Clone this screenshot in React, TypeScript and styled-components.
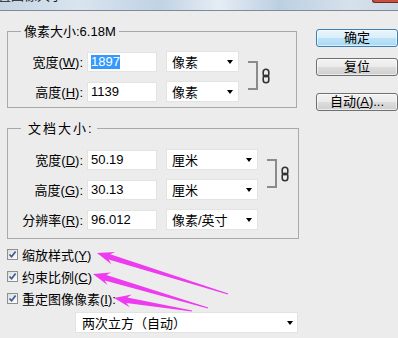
import styled, { createGlobalStyle } from 'styled-components'

const GlobalStyle = createGlobalStyle`
  html, body {
    margin: 0;
    padding: 0;
    background: #ececec;
  }
  body {
    font-family: 'Liberation Sans', 'Noto Sans CJK SC', sans-serif;
    font-size: 13px;
    color: #000;
  }
`

type ArrowSpec = { tip: [number, number]; tail: [number, number] }

const arrows: ArrowSpec[] = [
  { tip: [97, 253], tail: [228, 294] },
  { tip: [93, 274], tail: [208, 308] },
  { tip: [114, 298], tail: [192, 311] },
]

// polygon for a tapered arrow, head at tip
const arrowPoints = ({ tip, tail }: ArrowSpec) => {
  const [tx, ty] = tip
  const [ex, ey] = tail
  const len = Math.hypot(ex - tx, ey - ty)
  const ux = (ex - tx) / len
  const uy = (ey - ty) / len
  const nx = -uy
  const ny = ux
  const at = (d: number, w: number) =>
    `${(tx + ux * d + nx * w).toFixed(1)},${(ty + uy * d + ny * w).toFixed(1)}`
  const end = (w: number) => `${(ex + nx * w).toFixed(1)},${(ey + ny * w).toFixed(1)}`
  return [
    at(0, 0),
    at(17, 6.5),
    at(13, 2.8),
    end(0.6),
    end(-0.6),
    at(13, -2.8),
    at(17, -6.5),
  ].join(' ')
}

const App = () => {
  return (
    <>
      <GlobalStyle />
      <Window>
        <TitleBar>
          <TitleText>置图像大小</TitleText>
          <CloseBtn />
        </TitleBar>
        <Main>
          <LeftCol>
            <GroupBox $width={290} $top={12} $padTop={11} $padBottom={5}>
              <Legend>像素大小:6.18M</Legend>
              <GroupBody>
                <Rows>
                  <Row>
                    <Label>
                      宽度(<u>W</u>):
                    </Label>
                    <TextInput>
                      <Selected>1897</Selected>
                    </TextInput>
                    <Select $width={73}>像素</Select>
                  </Row>
                  <Row>
                    <Label>
                      高度(<u>H</u>):
                    </Label>
                    <TextInput>1139</TextInput>
                    <Select $width={73}>像素</Select>
                  </Row>
                </Rows>
                <LinkBracket />
                <LinkIcon />
              </GroupBody>
            </GroupBox>

            <GroupBox $width={292} $top={12} $padTop={12} $padBottom={8}>
              <Legend $indent={7} $spaced>
                文档大小:
              </Legend>
              <GroupBody>
                <Rows>
                  <Row>
                    <Label>
                      宽度(<u>D</u>):
                    </Label>
                    <TextInput>50.19</TextInput>
                    <Select $width={92}>厘米</Select>
                  </Row>
                  <Row>
                    <Label>
                      高度(<u>G</u>):
                    </Label>
                    <TextInput>30.13</TextInput>
                    <Select $width={92}>厘米</Select>
                  </Row>
                  <Row>
                    <Label>
                      分辨率(<u>R</u>):
                    </Label>
                    <TextInput>96.012</TextInput>
                    <Select $width={92}>像素/英寸</Select>
                  </Row>
                </Rows>
                <LinkBracket />
                <LinkIcon />
              </GroupBody>
            </GroupBox>

            <Checks>
              <CheckRow>
                <CheckBox />
                <span>
                  缩放样式(<u>Y</u>)
                </span>
              </CheckRow>
              <CheckRow>
                <CheckBox />
                <span>
                  约束比例(<u>C</u>)
                </span>
              </CheckRow>
              <CheckRow>
                <CheckBox />
                <span>
                  重定图像像素(<u>I</u>):
                </span>
              </CheckRow>
            </Checks>
            <ResampleSelect>两次立方（自动）</ResampleSelect>
          </LeftCol>

          <RightCol>
            <Button $primary>确定</Button>
            <Button $gap={11}>复位</Button>
            <Button $gap={17}>
              <span>
                自动(<u>A</u>)...
              </span>
            </Button>
          </RightCol>
        </Main>

        <ArrowLayer viewBox="0 0 398 338">
          {arrows.map((a, i) => (
            <polygon key={i} points={arrowPoints(a)} />
          ))}
        </ArrowLayer>
      </Window>
    </>
  )
}

const CheckBox = () => (
  <CheckBoxBox>
    <svg width="9" height="9" viewBox="0 0 9 9">
      <path d="M1.5 4.5 L3.6 6.8 L7.6 1.6" fill="none" stroke="#3a5a94" strokeWidth="1.7" />
    </svg>
  </CheckBoxBox>
)

const LinkIcon = () => (
  <LinkWrap>
    <svg width="8" height="16" viewBox="0 0 8 16">
      <rect x="1.2" y="1.2" width="5.6" height="7.6" rx="2.8" fill="none" stroke="#333" strokeWidth="1.6" />
      <rect x="1.2" y="7.2" width="5.6" height="7.6" rx="2.8" fill="none" stroke="#333" strokeWidth="1.6" />
    </svg>
  </LinkWrap>
)

const Window = styled.div`
  position: relative;
  width: 398px;
  height: 338px;
  overflow: hidden;
  background: #ececec;
  u {
    text-decoration: underline;
    text-underline-offset: 1px;
  }
`

const TitleBar = styled.div`
  height: 10px;
  display: flex;
  align-items: flex-start;
  overflow: hidden;
  border-bottom: 1px solid #7c8a99;
  background: linear-gradient(
    90deg,
    #c6d5e4 0%,
    #d9e4ef 20%,
    #c0d2e4 40%,
    #e6edf4 55%,
    #bccfe2 70%,
    #d6e1ec 88%,
    #c9d7e5 100%
  );
`

const TitleText = styled.span`
  margin-top: -11px;
  margin-left: -2px;
  line-height: 14px;
  font-size: 13px;
  color: #1a1a1a;
`

const CloseBtn = styled.div`
  margin-left: auto;
  width: 25px;
  height: 2px;
  background: #c8503e;
  border: 1px solid #6e2a20;
  border-top: none;
  border-right: none;
  border-radius: 0 0 0 3px;
`

const Main = styled.div`
  display: flex;
  padding-left: 7px;
`

const LeftCol = styled.div`
  width: 291px;
  display: flex;
  flex-direction: column;
`

const GroupBox = styled.fieldset<{
  $width: number
  $top: number
  $padTop: number
  $padBottom: number
}>`
  box-sizing: border-box;
  width: ${(p) => p.$width}px;
  margin: ${(p) => p.$top}px 0 0 0;
  padding: ${(p) => p.$padTop}px 0 ${(p) => p.$padBottom}px 0;
  border: 1px solid #a9a9a9;
  min-width: 0;
`

const Legend = styled.legend<{ $indent?: number; $spaced?: boolean }>`
  margin-left: 13px;
  padding: 0 3px 0 ${(p) => p.$indent ?? 3}px;
  line-height: 17px;
  font-size: 13px;
  letter-spacing: ${(p) => (p.$spaced ? '2px' : '0')};
`

const GroupBody = styled.div`
  display: flex;
  align-items: flex-start;
`

const Rows = styled.div`
  display: flex;
  flex-direction: column;
  gap: 9px;
`

const Row = styled.div`
  display: flex;
  align-items: center;
  height: 21px;
`

const Label = styled.span`
  width: 75px;
  text-align: right;
  white-space: nowrap;
  margin-right: 4px;
`

const TextInput = styled.div`
  box-sizing: border-box;
  width: 70px;
  height: 20px;
  background: #fff;
  border: 1px solid #e3e3e3;
  padding-left: 3px;
  display: flex;
  align-items: center;
  margin-right: 9px;
`

const Selected = styled.span`
  background: #3399ff;
  color: #fff;
  line-height: 14px;
`

const Select = styled.div<{ $width: number }>`
  box-sizing: border-box;
  width: ${(p) => p.$width}px;
  height: 21px;
  background: #fff;
  border: 1px solid #e3e3e3;
  display: flex;
  align-items: center;
  padding-left: 5px;
  white-space: nowrap;
  &::after {
    content: '';
    margin-left: auto;
    margin-right: 5px;
    border-left: 3.5px solid transparent;
    border-right: 3.5px solid transparent;
    border-top: 4px solid #000;
  }
`

const LinkBracket = styled.div`
  box-sizing: border-box;
  margin: 10px 0 0 9px;
  width: 10px;
  height: 29px;
  border: 2px solid #8b8b8b;
  border-left: none;
`

const LinkWrap = styled.div`
  margin: 17px 0 0 4px;
  display: flex;
`

const Checks = styled.div`
  margin-top: 4px;
  display: flex;
  flex-direction: column;
`

const CheckRow = styled.div`
  height: 22px;
  display: flex;
  align-items: center;
  gap: 4px;
  white-space: nowrap;
`

const CheckBoxBox = styled.div`
  box-sizing: border-box;
  width: 11px;
  height: 11px;
  border: 1px solid #8e8f8f;
  background: linear-gradient(135deg, #dcdcdc, #ffffff);
  display: flex;
  align-items: center;
  justify-content: center;
`

const ResampleSelect = styled(Select).attrs({ $width: 223 })`
  margin: 3px 0 0 68px;
  padding-left: 6px;
  &::after {
    margin-right: 4px;
  }
`

const RightCol = styled.div`
  margin-left: 18px;
  padding-top: 18px;
  display: flex;
  flex-direction: column;
`

const Button = styled.div<{ $primary?: boolean; $gap?: number }>`
  box-sizing: border-box;
  width: 82px;
  height: 18px;
  margin-top: ${(p) => p.$gap ?? 0}px;
  border-radius: 3px;
  border: 1px solid ${(p) => (p.$primary ? '#3c7fb1' : '#707070')};
  background: ${(p) =>
    p.$primary
      ? 'linear-gradient(#e9f5fc 0%, #d9eefa 50%, #bde3f8 51%, #a9d9f4 100%)'
      : 'linear-gradient(#f2f2f2 0%, #ebebeb 50%, #dddddd 51%, #cfcfcf 100%)'};
  box-shadow: inset 0 0 0 1px rgba(255, 255, 255, 0.6);
  display: flex;
  align-items: center;
  justify-content: center;
  line-height: 14px;
  white-space: nowrap;
`

const ArrowLayer = styled.svg`
  position: absolute;
  left: 0;
  top: 0;
  width: 398px;
  height: 338px;
  pointer-events: none;
  fill: #ee3bef;
`

export default App
